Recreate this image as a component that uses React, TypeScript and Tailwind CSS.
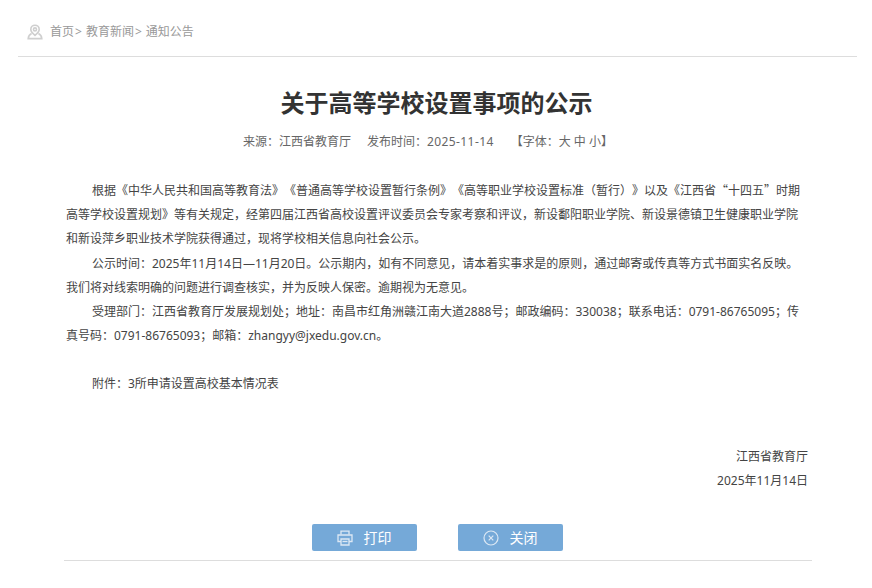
const FONT = "font-['Noto_Sans','Noto_Sans_CJK_SC',sans-serif]";

function PinIcon() {
  return (
    <svg width="16" height="16" viewBox="0 0 16 16" fill="none" stroke="#cfcfcf" strokeWidth="1.6">
      <path d="M8 1.2a4.2 4.2 0 0 0-4.2 4.2c0 2.4 2.4 4.4 4.2 6 1.8-1.6 4.2-3.6 4.2-6A4.2 4.2 0 0 0 8 1.2z" />
      <circle cx="8" cy="5.4" r="1.5" />
      <path d="M4.6 9.6C2.8 10.4 1.4 12 1.2 14.6h13.6c-.2-2.6-1.6-4.2-3.4-5" />
    </svg>
  );
}

function PrintIcon() {
  return (
    <svg width="16" height="16" viewBox="0 0 16 16" fill="none" stroke="#dce8f4" strokeWidth="1.3">
      <path d="M4 4.5V1.2h8v3.3" />
      <path d="M4 11.5H1V5h14v6.500h-3" />
      <path d="M4 9h8v6H4z" />
      <path d="M5.500 11.500h5" />
    </svg>
  );
}

function CloseIcon() {
  return (
    <svg width="16" height="16" viewBox="0 0 16 16" fill="none" stroke="#dce8f4" strokeWidth="1.2">
      <circle cx="8" cy="8" r="7" />
      <path d="M5.700 5.700l4.600 4.600M10.300 5.700l-4.600 4.600" />
    </svg>
  );
}

function Crumb({ children }: { children: string }) {
  return (
    <>
      <span>{children}</span>
      <span className="ml-[1px] mr-[4px]">&gt;</span>
    </>
  );
}

export default function App() {
  return (
    <div className={`${FONT} h-[588px] w-[872px] overflow-hidden bg-white text-[13px] [text-spacing-trim:space-all]`}>
      <div className="mx-[18px] h-[57px] w-[839px] border-b border-[#dddddd] pt-[24px] pl-[9px]">
        <div className="flex h-4 items-center text-[12px] text-[#999999]">
          <PinIcon />
          <span className="ml-[7px] flex">
            <Crumb>首页</Crumb>
            <Crumb>教育新闻</Crumb>
            <span>通知公告</span>
          </span>
        </div>
      </div>

      <h1 className="mt-[29px] pl-[1px] text-center text-[24px] leading-[34px] font-bold text-[#333333]">
        关于高等学校设置事项的公示
      </h1>

      <div className="mt-[12px] flex pl-[243px] text-[12px] leading-[20px] text-[#666666]">
        <span>来源：江西省教育厅</span>
        <span className="ml-[16px]">
          发布时间：<span className="tracking-[0.4px]">2025-11-14</span>
        </span>
        <span className="ml-[17px]">【字体：大 中 小】</span>
      </div>

      <div className="mx-[66px] mt-[26px] w-[742px] text-[12px] leading-[24.2px] text-[#444444]">
        <p className="indent-[26px]">
          根据《中华人民共和国高等教育法》《普通高等学校设置暂行条例》《高等职业学校设置标准（暂行）》以及《江西省<span className="font-['Noto_Sans_CJK_SC']">“十四五”</span>时期高等学校设置规划》等有关规定，经第四届江西省高校设置评议委员会专家考察和评议，新设鄱阳职业学院、新设景德镇卫生健康职业学院和新设萍乡职业技术学院获得通过，现将学校相关信息向社会公示。
        </p>
        <p className="indent-[26px]">
          公示时间：2025年11月14日—11月20日。公示期内，如有不同意见，请本着实事求是的原则，通过邮寄或传真等方式书面实名反映。我们将对线索明确的问题进行调查核实，并为反映人保密。逾期视为无意见。
        </p>
        <p className="indent-[26px]">
          受理部门：江西省教育厅发展规划处；地址：南昌市红角洲赣江南大道2888号；邮政编码：330038；联系电话：0791-86765095；传真号码：0791-86765093；邮箱：zhangyy@jxedu.gov.cn。
        </p>
        <p className="mt-[24px] indent-[26px]">附件：3所申请设置高校基本情况表</p>
        <p className="mt-[48px] text-right">江西省教育厅</p>
        <p className="text-right">2025年11月14日</p>
      </div>

      <div className="mx-[64px] mt-[31px] flex h-[37px] w-[748px] justify-center gap-[41px] border-b border-[#dddddd] pr-[2px] text-[14px] text-white">
        <button className="flex h-[27px] w-[105px] items-center justify-center gap-[11px] rounded-[2px] bg-[#75a9d8]">
          <PrintIcon />
          打印
        </button>
        <button className="flex h-[27px] w-[105px] items-center justify-center gap-[11px] rounded-[2px] bg-[#75a9d8]">
          <CloseIcon />
          关闭
        </button>
      </div>
    </div>
  );
}
